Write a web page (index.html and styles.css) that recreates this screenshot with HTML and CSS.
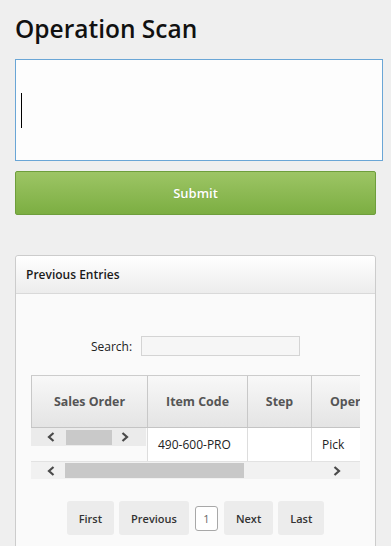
FILE: index.html
```html
<!DOCTYPE html>
<html lang="en">
<head>
<meta charset="utf-8">
<title>Operation Scan</title>
<link rel="stylesheet" href="styles.css">
</head>
<body>
<h1 class="title">Operation Scan</h1>
<div class="scan-box"><span class="caret"></span></div>
<button class="submit" type="button">Submit</button>

<section class="panel">
  <div class="panel-heading">Previous Entries</div>
  <div class="panel-body">
    <div class="search">
      <label class="search-label">Search:</label>
      <span class="search-input"></span>
    </div>

    <div class="dt">
      <div class="dt-head">
        <div class="th">Sales Order</div>
        <div class="th">Item Code</div>
        <div class="th">Step</div>
        <div class="th th-op">Operation</div>
      </div>
      <div class="dt-row">
        <div class="td td-fixed">
          <div class="mini-scroll">
            <svg class="chev chev-l" width="8" height="10" viewBox="0 0 8 10"><polyline points="6.5,1 2,5 6.5,9" fill="none" stroke="#4a4a4a" stroke-width="2.2"/></svg>
            <span class="mini-thumb"></span>
            <svg class="chev chev-r" width="8" height="10" viewBox="0 0 8 10"><polyline points="1.5,1 6,5 1.5,9" fill="none" stroke="#4a4a4a" stroke-width="2.2"/></svg>
          </div>
        </div>
        <div class="td">490-600-PRO</div>
        <div class="td"></div>
        <div class="td">Pick</div>
      </div>
      <div class="hscroll">
        <svg class="chev hs-l" width="8" height="10" viewBox="0 0 8 10"><polyline points="6.5,1 2,5 6.5,9" fill="none" stroke="#4a4a4a" stroke-width="2.2"/></svg>
        <span class="hs-thumb"></span>
        <span class="hs-space"></span>
        <svg class="chev hs-r" width="8" height="10" viewBox="0 0 8 10"><polyline points="1.5,1 6,5 1.5,9" fill="none" stroke="#4a4a4a" stroke-width="2.2"/></svg>
      </div>
    </div>

    <div class="pager">
      <span class="pg-btn">First</span>
      <span class="pg-btn">Previous</span>
      <span class="pg-current">1</span>
      <span class="pg-btn">Next</span>
      <span class="pg-btn">Last</span>
    </div>
  </div>
</section>
</body>
</html>
```

FILE: styles.css
```css
html, body {
  margin: 0;
  padding: 0;
}

body {
  background: #efefef;
  font-family: "Open Sans", "DejaVu Sans", sans-serif;
  color: #222;
  padding: 12px 15px 0;
  width: 361px;
  height: 534px;
  overflow: hidden;
}

.title {
  margin: 0;
  font-size: 24.5px;
  line-height: 34px;
  font-weight: 600;
  color: #111;
}

.scan-box {
  margin-top: 13px;
  width: 361px;
  height: 100px;
  border: 1px solid #6aa6d6;
  background: #fdfdfd;
  display: flex;
  align-items: center;
  padding-left: 5px;
  box-sizing: content-box;
}

.caret {
  display: block;
  width: 1px;
  height: 35px;
  background: #000;
}

.submit {
  display: block;
  margin-top: 10px;
  width: 361px;
  height: 44px;
  border: 1px solid #6e9e3c;
  border-radius: 2px;
  background: linear-gradient(to bottom, #9dc565 0%, #7cae42 100%);
  color: #fff;
  font-family: "Open Sans", "DejaVu Sans", sans-serif;
  font-size: 13px;
  font-weight: 600;
  text-shadow: 0 0 1px rgba(0,0,0,0.15);
  padding: 0;
}

.panel {
  margin-top: 40px;
  width: 361px;
  border: 1px solid #cccccc;
  border-radius: 3px;
  background: #fafafa;
  box-sizing: border-box;
  height: 300px;
}

.panel-heading {
  height: 37px;
  border-bottom: 1px solid #d9d9d9;
  background: linear-gradient(to bottom, #ffffff 0%, #ececec 100%);
  border-radius: 3px 3px 0 0;
  padding-left: 10px;
  display: flex;
  align-items: center;
  font-size: 12px;
  font-weight: 600;
  color: #1a1a1a;
}

.panel-body {
  padding: 42px 15px 0;
}

.search {
  display: flex;
  justify-content: center;
  align-items: center;
  gap: 9px;
  height: 20px;
}

.search-label {
  font-size: 12px;
  color: #222;
}

.search-input {
  display: block;
  width: 157px;
  height: 18px;
  border: 1px solid #d4d4d4;
  background: #f6f6f6;
}

.dt {
  margin-top: 19px;
  width: 329px;
  overflow: hidden;
}

.dt-head,
.dt-row {
  display: grid;
  grid-template-columns: 116px 100px 64px 110px;
  width: max-content;
}

.dt-head {
  border-top: 1px solid #cccccc;
  border-bottom: 1px solid #c4c4c4;
  background: linear-gradient(to bottom, #f8f8f8 0%, #e4e4e4 100%);
}

.th {
  height: 51px;
  border-left: 1px solid #c8c8c8;
  display: flex;
  align-items: center;
  justify-content: center;
  font-size: 12.4px;
  font-weight: 700;
  color: #555;
  white-space: nowrap;
}

.th-op {
  justify-content: flex-start;
  padding-left: 18px;
}

.dt-row {
  height: 33px;
  border-bottom: 1px solid #e2e2e2;
}

.td {
  background: #fff;
  border-left: 1px solid #dddddd;
  font-size: 12px;
  color: #222;
  padding-left: 10px;
  display: flex;
  align-items: center;
  white-space: nowrap;
}

.td-fixed {
  background: #fafafa;
  border-left: 0;
  padding: 0;
  align-items: flex-start;
}

.mini-scroll {
  width: 115px;
  height: 18px;
  background: #ebebeb;
  display: flex;
  align-items: center;
}

.chev {
  display: block;
  flex: none;
}

.mini-scroll .chev-l {
  margin-left: 16px;
}

.mini-thumb {
  display: block;
  width: 46px;
  height: 15px;
  background: #c9c9c9;
  margin-left: 11px;
}

.mini-scroll .chev-r {
  margin-left: 9px;
}

.hscroll {
  height: 17px;
  background: #f1f1f1;
  display: flex;
  align-items: center;
}

.hs-l {
  margin-left: 16px;
}

.hs-thumb {
  display: block;
  width: 179px;
  height: 15px;
  background: #c8c8c8;
  margin-left: 10px;
}

.hs-space {
  flex: 1;
}

.hs-r {
  margin-right: 19px;
}

.pager {
  margin-top: 22px;
  display: flex;
  justify-content: center;
  align-items: center;
  gap: 5px;
}

.pg-btn {
  display: flex;
  align-items: center;
  height: 34px;
  padding: 0 12px;
  background: #ececec;
  border-radius: 3px;
  font-size: 11px;
  font-weight: 600;
  color: #333;
}

.pg-current {
  display: flex;
  align-items: center;
  justify-content: center;
  width: 21px;
  height: 23px;
  border: 1px solid #a8a8a8;
  border-radius: 3px;
  background: #fff;
  font-size: 11px;
  color: #666;
  margin: 0 1px;
}
```
